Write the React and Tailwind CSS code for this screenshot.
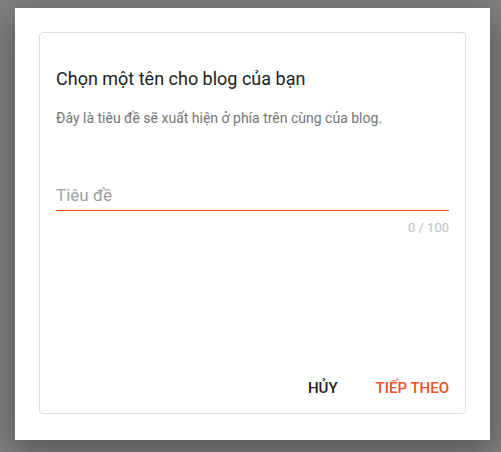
export default function App() {
  return (
    <div className="w-[501px] h-[452px] bg-[#7f7f7f] pt-[8px] pl-[15px]" style={{ fontFamily: "Roboto, 'Noto Sans', sans-serif" }}>
      <div className="w-[475px] h-[432px] bg-white p-[24px] pb-[26px] shadow-[0_10px_30px_rgba(0,0,0,0.35)]">
        <div className="h-full border border-[#d7dde2] rounded-[4px] px-[16px] flex flex-col">
          <h1 className="mt-[34px] text-[18px] leading-[24px] text-[#212121] font-normal">Chọn một tên cho blog của bạn</h1>
          <p className="mt-[17px] text-[14px] leading-[20px] text-[#757575]">Đây là tiêu đề sẽ xuất hiện ở phía trên cùng của blog.</p>
          <div className="mt-[56px] border-b border-[#f4511e] pb-[2px]">
            <span className="text-[17px] leading-[22px] text-[#a0a0a0]">Tiêu đề</span>
          </div>
          <div className="mt-[9px] text-right text-[13px] leading-[15px] text-[#bdbdbd]">0 / 100</div>
          <div className="mt-auto mb-[15px] flex justify-end gap-[38px]">
            <span className="text-[15px] leading-[20px] font-medium text-[#212121]">HỦY</span>
            <span className="text-[15px] leading-[20px] font-medium text-[#f4511e]">TIẾP THEO</span>
          </div>
        </div>
      </div>
    </div>
  );
}
